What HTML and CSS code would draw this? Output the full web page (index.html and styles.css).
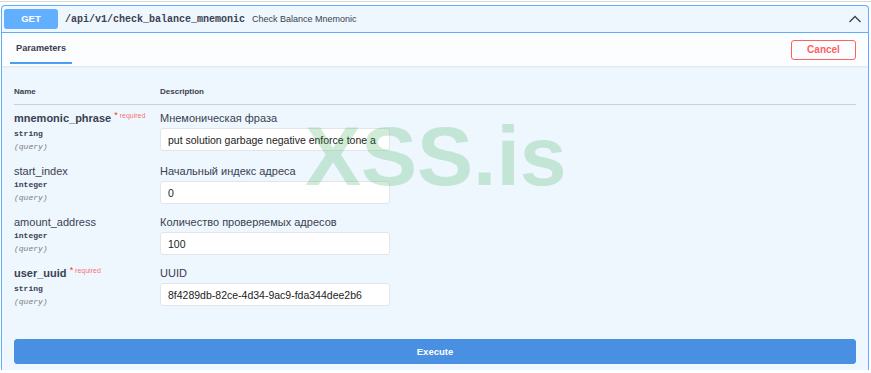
FILE: index.html
```html
<!DOCTYPE html>
<html lang="en">
<head>
    <meta charset="UTF-8">
    <meta name="viewport" content="width=device-width, initial-scale=1.0">
    <title>Swagger UI - check_balance_mnemonic</title>
    <link rel="stylesheet" href="styles.css">
</head>
<body>
    <div class="top-rule"></div>
    <div class="opblock">
        <div class="summary">
            <span class="method">GET</span>
            <span class="path">/api/v1/check_balance_mnemonic</span>
            <span class="summary-desc">Check Balance Mnemonic</span>
            <svg class="arrow" width="14" height="8" viewBox="0 0 14 8">
                <polyline points="1.5,7 7,1.5 12.5,7" fill="none" stroke="#3b4151" stroke-width="1.3"/>
            </svg>
        </div>
        <div class="section-header">
            <div class="tab-item">Parameters</div>
            <button class="btn-cancel">Cancel</button>
        </div>
        <div class="params">
            <div class="param-head">
                <div>Name</div>
                <div>Description</div>
            </div>

            <div class="param-row">
                <div class="param-col">
                    <div class="param-name required">mnemonic_phrase <span class="req"><span class="star">*</span> required</span></div>
                    <div class="param-type">string</div>
                    <div class="param-in">(query)</div>
                </div>
                <div class="param-desc">
                    <div class="param-label">Мнемоническая фраза</div>
                    <input class="param-input" type="text" value="put solution garbage negative enforce tone a">
                </div>
            </div>

            <div class="param-row">
                <div class="param-col">
                    <div class="param-name">start_index</div>
                    <div class="param-type">integer</div>
                    <div class="param-in">(query)</div>
                </div>
                <div class="param-desc">
                    <div class="param-label">Начальный индекс адреса</div>
                    <input class="param-input" type="text" value="0">
                </div>
            </div>

            <div class="param-row">
                <div class="param-col">
                    <div class="param-name">amount_address</div>
                    <div class="param-type">integer</div>
                    <div class="param-in">(query)</div>
                </div>
                <div class="param-desc">
                    <div class="param-label">Количество проверяемых адресов</div>
                    <input class="param-input" type="text" value="100">
                </div>
            </div>

            <div class="param-row">
                <div class="param-col">
                    <div class="param-name required">user_uuid <span class="req"><span class="star">*</span> required</span></div>
                    <div class="param-type">string</div>
                    <div class="param-in">(query)</div>
                </div>
                <div class="param-desc">
                    <div class="param-label">UUID</div>
                    <input class="param-input" type="text" value="8f4289db-82ce-4d34-9ac9-fda344dee2b6">
                </div>
            </div>

            <button class="btn-execute">Execute</button>
        </div>
        <div class="watermark">XSS.is</div>
    </div>
</body>
</html>
```

FILE: styles.css
```css
body {
    margin: 0;
    font-family: "Liberation Sans", Arial, sans-serif;
    color: #3b4151;
    background-color: #fff;
    overflow: hidden;
}
.top-rule {
    margin-top: 1px;
    border-top: 1px solid #d6d6d6;
}
.opblock {
    position: relative;
    margin: 3px 2px 0 1px;
    border: 1px solid #61affe;
    border-bottom: none;
    border-radius: 4px 4px 0 0;
    background-color: #eef6fe;
}
.summary {
    display: flex;
    align-items: center;
    padding: 3px 6px 3px 2px;
    border-bottom: 1px solid #61affe;
}
.method {
    width: 54px;
    height: 20px;
    line-height: 20px;
    text-align: center;
    background-color: #61affe;
    color: #fff;
    font-size: 9.5px;
    font-weight: bold;
    border-radius: 3px;
}
.path {
    margin-left: 7px;
    font-family: "Liberation Mono", monospace;
    font-weight: bold;
    font-size: 10px;
}
.summary-desc {
    margin-left: 7px;
    font-size: 9px;
    flex: 1;
}
.arrow {
    display: block;
}
.section-header {
    display: flex;
    justify-content: space-between;
    align-items: center;
    height: 33px;
    padding: 0 12px 0 8px;
    background-color: rgba(255, 255, 255, 0.8);
    box-shadow: 0 1px 2px rgba(0, 0, 0, 0.08);
    position: relative;
}
.tab-item {
    align-self: flex-start;
    box-sizing: border-box;
    height: 31px;
    padding: 10px 6px 0;
    font-size: 9.2px;
    font-weight: bold;
    border-bottom: 2px solid #4a9ff5;
}
.btn-cancel {
    width: 65px;
    height: 20px;
    padding: 0;
    font-family: inherit;
    font-size: 10px;
    font-weight: bold;
    color: #ff6060;
    background-color: transparent;
    border: 1.5px solid #ff6060;
    border-radius: 3px;
}
.params {
    padding: 0 12px 6px;
}
.param-head {
    display: grid;
    grid-template-columns: 146px 1fr;
    padding: 21px 0 7px;
    font-size: 8px;
    font-weight: bold;
    line-height: 10px;
    border-bottom: 1px solid rgba(59, 65, 81, 0.2);
}
.param-row {
    display: grid;
    grid-template-columns: 146px 1fr;
    padding: 6px 0 5px;
}
.param-name {
    font-size: 11px;
    line-height: 14px;
}
.param-name.required {
    font-weight: bold;
}
.req {
    position: relative;
    top: -4px;
    font-size: 7px;
    font-weight: normal;
    color: rgba(255, 0, 0, 0.6);
}
.req .star {
    color: #ff3030;
    font-size: 9px;
}
.param-type {
    font-family: "Liberation Mono", monospace;
    font-weight: bold;
    font-size: 8px;
    line-height: 13px;
}
.param-in {
    font-family: "Liberation Mono", monospace;
    font-style: italic;
    font-size: 8px;
    line-height: 13px;
    color: #808080;
}
.param-label {
    font-size: 11px;
    line-height: 14px;
}
.param-input {
    display: block;
    box-sizing: border-box;
    width: 230px;
    height: 23px;
    margin-top: 3px;
    padding: 0 7px;
    font-family: inherit;
    font-size: 10.5px;
    color: #222;
    background-color: #fff;
    border: 1px solid #e2e6ea;
    border-radius: 3px;
}
.btn-execute {
    display: block;
    width: 100%;
    height: 25px;
    margin-top: 26px;
    font-family: inherit;
    font-size: 9.5px;
    font-weight: bold;
    color: #fff;
    background-color: #4990e2;
    border: 1px solid #4990e2;
    border-radius: 3px;
}
.watermark {
    position: absolute;
    top: 108px;
    left: 303px;
    font-size: 84px;
    line-height: 1;
    font-weight: bold;
    color: rgba(40, 170, 70, 0.22);
    pointer-events: none;
}
```
